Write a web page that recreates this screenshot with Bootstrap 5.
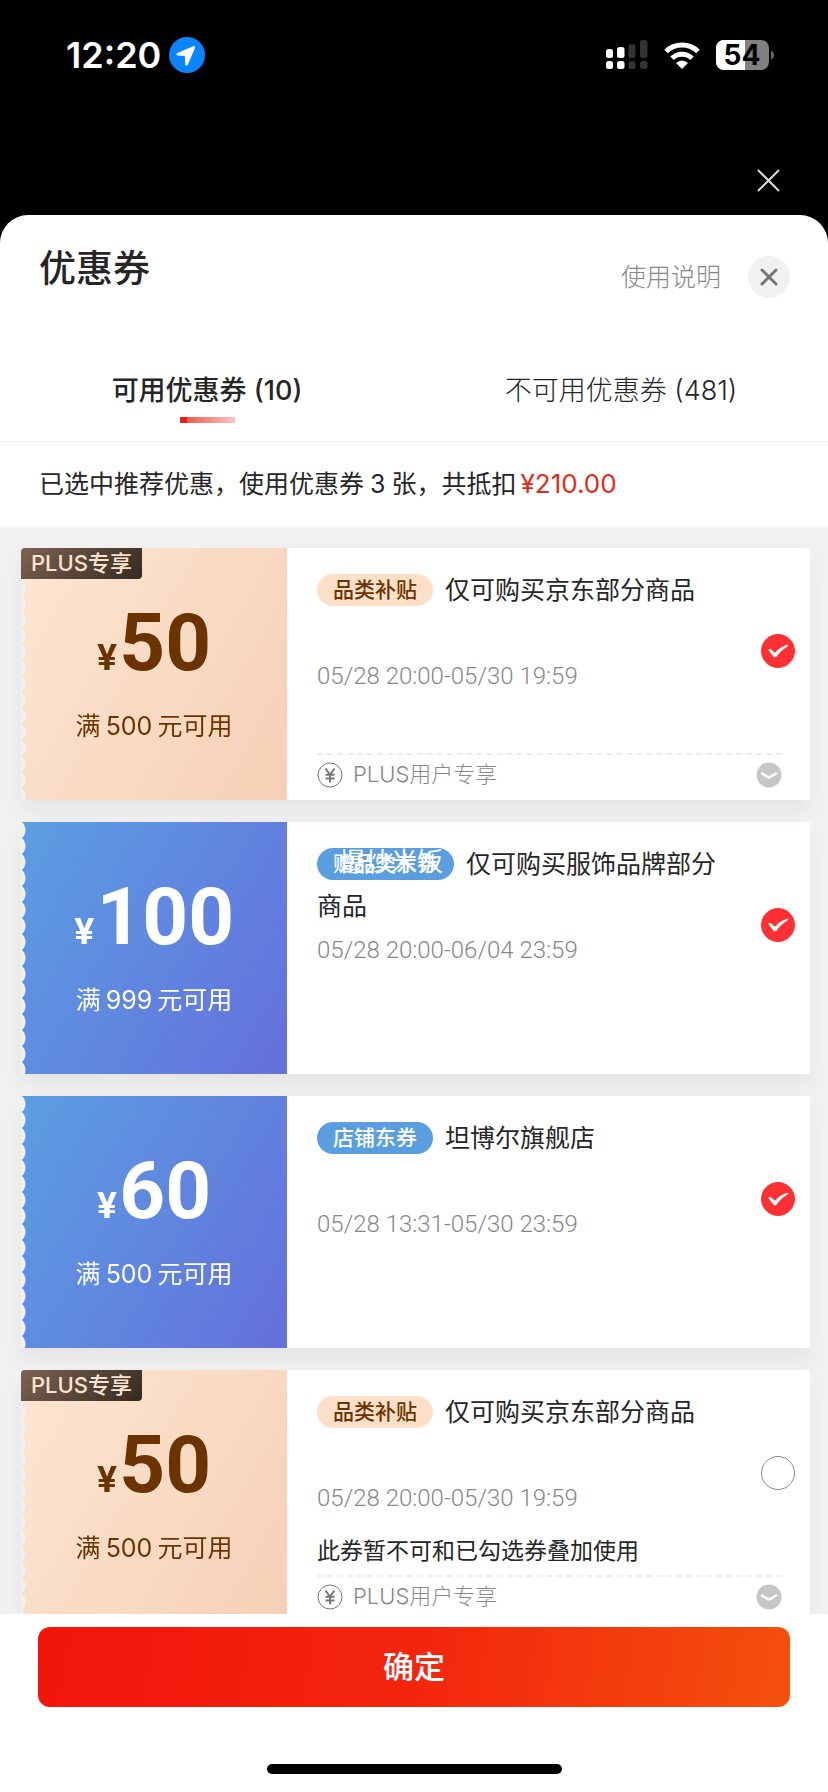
<!DOCTYPE html>
<html lang="zh-CN">
<head>
<meta charset="utf-8">
<meta name="viewport" content="width=device-width, initial-scale=1">
<title>优惠券</title>
<link href="https://cdn.jsdelivr.net/npm/bootstrap@5.3.0/dist/css/bootstrap.min.css" rel="stylesheet">
<style>
  body { font-family: Inter, "Noto Sans CJK SC", sans-serif; color: #262626; background: #000; }
  svg { display: block; }
  .clock { font-size: 36px; font-weight: 600; line-height: 44px; }
  .status { padding: 33px 54px 0 66px; height: 160px; }
  .status-icons { height: 44px; }
  .battery-text { font-size: 28px; font-weight: 700; }
  .backdrop-close { padding: 0 45px 20px 0; }
  .sheet { border-radius: 28px 28px 0 0; min-height: 0; }
  .sheet-head { padding: 30px 38px 0 39px; height: 126px; }
  .sheet-title { font-size: 37px; font-weight: 500; line-height: 48px; }
  .sheet-tools { gap: 27px; padding-top: 11px; }
  .help-link { font-size: 25px; font-weight: 300; line-height: 32px; color: #888; }
  .round-close { width: 42px; height: 42px; background: #f1f1f1; }
  .tab-row { border-bottom: 1px solid #eee; }
  .tab-btn { height: 100px; padding: 30px 0 18px; font-size: 27px; line-height: 40px; font-weight: 300; color: #262626; }
  .tab-btn.active { font-weight: 500; }
  .tab-bar { width: 55px; height: 7px; margin-top: 6px; background: linear-gradient(90deg, #e8210f 7px, #ee5c4b 7px, #f8c7c4); }
  .summary { font-size: 25px; line-height: 36px; padding: 24px 39px 25px; }
  .summary .count { padding: 0 6px; }
  .summary .money { font-size: 26px; color: #e02b1d; }
  .coupon-list { background: #f1f1f1; padding: 21px 18px 0 21px; gap: 22px; min-height: 0; overflow-y: auto; scrollbar-width: none; }
  .coupon-list::-webkit-scrollbar { display: none; }
  .coupon { min-height: 252px; box-shadow: 0 12px 20px rgba(0, 0, 0, .05); }
  .coupon-face { width: 266px; padding-top: 51px; background: linear-gradient(120deg, #5b9ee2, #6570dc);
    -webkit-mask: radial-gradient(circle at -6px 50%, transparent 10px, #000 11px) 0 0 / 100% 16px;
    mask: radial-gradient(circle at -6px 50%, transparent 10px, #000 11px) 0 0 / 100% 16px; }
  .plus .coupon-face { background: linear-gradient(120deg, #fee6d2, #f5d0b6); color: #6b3300; }
  .amount { font-family: Roboto, sans-serif; font-weight: 700; font-size: 80px; line-height: 88px; gap: 2px; }
  .amount small { font-family: Inter, sans-serif; font-size: 36px; font-weight: 700; }
  .limit { font-size: 25px; line-height: 36px; margin-top: 7px; }
  .limit span { padding: 0 5px; }
  .plus-flag { z-index: 1; font-size: 22px; line-height: 31px; padding: 0 10px; border-radius: 4px 0 4px 0; color: #fde4d0; font-weight: 500; background: linear-gradient(135deg, #7d6252, #352a22); }
  .coupon-main { height: 205px; padding: 21px 15px 0 30px; }
  .coupon-title { font-size: 25px; line-height: 42px; height: 84px; width: 410px; font-weight: 400; }
  .tag { font-size: 21px; line-height: 32px; font-weight: 500; padding: 0 16px; border-radius: 16px; margin-right: 12px; vertical-align: 2px; background: #5b9ee0; color: #fff; }
  .plus .tag { background: #fee0c8; color: #6b3300; }
  .tag-over { font-size: 26px; font-weight: 400; left: 22px; top: -2px; white-space: nowrap; }
  .period { font-family: Roboto, "Noto Sans CJK SC", sans-serif; font-weight: 300; font-size: 24px; line-height: 32px; margin-top: 7px; color: #888; }
  .conflict { font-size: 23px; line-height: 32px; margin-top: 21px; }
  .check { width: 34px; height: 34px; margin: -20px 0 0; border: 1px solid #888; background-color: #fff; flex: none; align-self: center; }
  .check:checked { border-color: #ff3034; background-color: #ff3034; background-size: 34px 34px;
    background-image: url("data:image/svg+xml,%3csvg xmlns='http://www.w3.org/2000/svg' viewBox='0 0 34 34'%3e%3cpath d='M7 15.4l2.4-.4 4.6 3.8q5-5.8 12.6-8.2l.6 1.3Q20 16 15 23.2h-2.200z' fill='%23fff'/%3e%3c/svg%3e"); }
  .coupon-note { margin: 0 28px 0 30px; border-top: 2px dashed #eee; font-size: 22px; line-height: 30px; height: 47px; padding-top: 4px; color: #888; font-weight: 300; }
  .coupon-note span { gap: 10px; }
  .action { padding: 13px 38px 0; height: 178px; }
  .confirm { height: 80px; border-radius: 12px; font-size: 31px; font-weight: 500; color: #fff; background: linear-gradient(100deg, #f2140c, #f3250d 50%, #f4500d); }
  .home-bar { width: 295px; height: 10px; margin-bottom: 18px; background: #000; }
</style>
</head>
<body class="vh-100 d-flex flex-column overflow-hidden">

<header class="status d-flex align-items-start justify-content-between text-white flex-shrink-0">
  <div class="d-flex align-items-center gap-2">
    <span class="clock">12:20</span>
    <svg width="36" height="36" viewBox="0 0 37 37"><circle cx="18.500" cy="18.500" r="18.500" fill="#0a84ff"/><path d="M25.400 9.300 8.600 16.500c-1.300.6-1 2.400.4 2.500l7.300.5.3 8.400c.1 1.600 2.100 1.900 2.700.5l7.300-16.900c.5-1.200-.2-2.500-1.200-2.200z" fill="#fff"/></svg>
  </div>
  <div class="status-icons d-flex align-items-center">
    <svg width="42" height="30" viewBox="0 0 42 30"><g fill="#fff"><rect y="9" width="7" height="9" rx="2.500"/><rect x="11" y="7" width="7.500" height="11" rx="2.500"/><rect y="21" width="7" height="8" rx="2.500"/><rect x="11" y="21" width="7.500" height="8" rx="2.500"/></g><g fill="#333"><rect x="22.500" y="4" width="7" height="14" rx="2.500"/><rect x="34" width="7.500" height="18" rx="2.500"/><rect x="22.500" y="21" width="7" height="8" rx="2.500"/><rect x="34" y="21" width="7.500" height="8" rx="2.500"/></g></svg>
    <svg class="ms-3" width="36" height="27" viewBox="0 0 36 27" fill="none" stroke="#fff"><path d="M2 9.500a23 23 0 0 1 32 0" stroke-width="5"/><path d="M8 16.200a14.500 14.500 0 0 1 20 0" stroke-width="5"/><path d="M18 27l-6-6q6-5 12 0z" fill="#fff" stroke="none"/></svg>
    <svg class="ms-3" width="58" height="30" viewBox="0 0 58 30"><defs><clipPath id="bat"><rect width="53" height="30" rx="8"/></clipPath></defs><g clip-path="url(#bat)"><rect width="53" height="30" fill="#808080"/><rect width="29" height="30" fill="#fff"/></g><path d="M55 10.500q3 1 3 4.500t-3 4.500z" fill="#666"/><text class="battery-text" x="26" y="25" text-anchor="middle" fill="#000">54</text></svg>
  </div>
</header>
<div class="backdrop-close d-flex justify-content-end flex-shrink-0">
  <button class="btn p-0 border-0" aria-label="关闭页面"><svg width="30" height="35" viewBox="0 0 30 35"><path d="M5 10 26 31M26 10 5 31" stroke="#ddd" stroke-width="2"/></svg></button>
</div>

<main class="sheet bg-white flex-fill d-flex flex-column overflow-hidden">
  <div class="sheet-head d-flex justify-content-between align-items-start flex-shrink-0">
    <h1 class="sheet-title m-0">优惠券</h1>
    <div class="sheet-tools d-flex align-items-center">
      <a href="#" class="help-link text-decoration-none">使用说明</a>
      <button class="round-close btn border-0 rounded-circle p-0 d-flex align-items-center justify-content-center" aria-label="关闭"><svg width="18" height="18" viewBox="0 0 18 18"><path d="M2 2l14 14M16 2 2 16" stroke="#777" stroke-width="3" stroke-linecap="round"/></svg></button>
    </div>
  </div>

  <div class="tab-row row g-0 flex-shrink-0" role="tablist">
    <button class="tab-btn active col btn border-0 rounded-0 d-flex flex-column align-items-center" role="tab" aria-selected="true">可用优惠券 (10)<span class="tab-bar"></span></button>
    <button class="tab-btn col btn border-0 rounded-0 d-flex flex-column align-items-center" role="tab" aria-selected="false">不可用优惠券 (481)</button>
  </div>

  <p class="summary m-0 flex-shrink-0">已选中推荐优惠，使用优惠券<span class="count">3</span>张，共抵扣<span class="money ps-1">¥210.00</span></p>

  <section class="coupon-list flex-fill d-flex flex-column">
    <article class="coupon plus d-flex position-relative flex-shrink-0">
      <span class="plus-flag position-absolute top-0 start-0">PLUS专享</span>
      <div class="coupon-face flex-shrink-0 text-center">
        <div class="amount d-flex justify-content-center align-items-baseline"><small>¥</small>50</div>
        <div class="limit">满<span>500</span>元可用</div>
      </div>
      <div class="flex-fill bg-white">
        <div class="coupon-main d-flex justify-content-between">
          <div>
            <h2 class="coupon-title m-0"><span class="tag d-inline-block">品类补贴</span><label for="c1">仅可购买京东部分商品</label></h2>
            <div class="period">05/28 20:00-05/30 19:59</div>
          </div>
          <input id="c1" class="form-check-input check rounded-circle" type="checkbox" checked>
        </div>
        <div class="coupon-note d-flex justify-content-between align-items-start">
          <span class="d-flex align-items-center"><svg width="26" height="30" viewBox="0 0 26 30"><g fill="none" stroke="#777"><circle cx="13" cy="16" r="12"/><path d="M8.500 9.500l4.500 6 4.500-6M13 15.500v8M8.500 15.800h9M8.500 19.500h9" stroke-width="2"/></g></svg>PLUS用户专享</span>
          <button class="btn p-0 border-0" aria-label="展开"><svg width="26" height="30" viewBox="0 0 26 30"><circle cx="13" cy="16" r="12.500" fill="#c6c6c6"/><path d="M6 14.500 12 18q1 .5 2 0l6-3.500" fill="none" stroke="#fff" stroke-width="2.600" stroke-linecap="round"/></svg></button>
        </div>
      </div>
    </article>

    <article class="coupon d-flex flex-shrink-0">
      <div class="coupon-face flex-shrink-0 text-center text-white">
        <div class="amount d-flex justify-content-center align-items-baseline"><small>¥</small>100</div>
        <div class="limit">满<span>999</span>元可用</div>
      </div>
      <div class="flex-fill bg-white">
        <div class="coupon-main d-flex justify-content-between">
          <div>
            <h2 class="coupon-title m-0"><span class="tag d-inline-block position-relative">赠品类东券<span class="tag-over position-absolute">爆炒米饭</span></span><label class="d-inline" for="c2">仅可购买服饰品牌部分商品</label></h2>
            <div class="period">05/28 20:00-06/04 23:59</div>
          </div>
          <input id="c2" class="form-check-input check rounded-circle" type="checkbox" checked>
        </div>
      </div>
    </article>

    <article class="coupon d-flex flex-shrink-0">
      <div class="coupon-face flex-shrink-0 text-center text-white">
        <div class="amount d-flex justify-content-center align-items-baseline"><small>¥</small>60</div>
        <div class="limit">满<span>500</span>元可用</div>
      </div>
      <div class="flex-fill bg-white">
        <div class="coupon-main d-flex justify-content-between">
          <div>
            <h2 class="coupon-title m-0"><span class="tag d-inline-block">店铺东券</span><label for="c3">坦博尔旗舰店</label></h2>
            <div class="period">05/28 13:31-05/30 23:59</div>
          </div>
          <input id="c3" class="form-check-input check rounded-circle" type="checkbox" checked>
        </div>
      </div>
    </article>

    <article class="coupon plus d-flex position-relative flex-shrink-0">
      <span class="plus-flag position-absolute top-0 start-0">PLUS专享</span>
      <div class="coupon-face flex-shrink-0 text-center">
        <div class="amount d-flex justify-content-center align-items-baseline"><small>¥</small>50</div>
        <div class="limit">满<span>500</span>元可用</div>
      </div>
      <div class="flex-fill bg-white">
        <div class="coupon-main d-flex justify-content-between">
          <div>
            <h2 class="coupon-title m-0"><span class="tag d-inline-block">品类补贴</span><label for="c4">仅可购买京东部分商品</label></h2>
            <div class="period">05/28 20:00-05/30 19:59</div>
            <div class="conflict">此券暂不可和已勾选券叠加使用</div>
          </div>
          <input id="c4" class="form-check-input check rounded-circle" type="checkbox">
        </div>
        <div class="coupon-note d-flex justify-content-between align-items-start">
          <span class="d-flex align-items-center"><svg width="26" height="30" viewBox="0 0 26 30"><g fill="none" stroke="#777"><circle cx="13" cy="16" r="12"/><path d="M8.500 9.500l4.500 6 4.500-6M13 15.500v8M8.500 15.800h9M8.500 19.500h9" stroke-width="2"/></g></svg>PLUS用户专享</span>
          <button class="btn p-0 border-0" aria-label="展开"><svg width="26" height="30" viewBox="0 0 26 30"><circle cx="13" cy="16" r="12.500" fill="#c6c6c6"/><path d="M6 14.500 12 18q1 .5 2 0l6-3.500" fill="none" stroke="#fff" stroke-width="2.600" stroke-linecap="round"/></svg></button>
        </div>
      </div>
    </article>
  </section>

  <footer class="action d-flex flex-column justify-content-between align-items-center flex-shrink-0">
    <button class="confirm btn border-0 w-100 p-0">确定</button>
    <div class="home-bar rounded-pill"></div>
  </footer>
</main>

<script src="https://cdn.jsdelivr.net/npm/bootstrap@5.3.0/dist/js/bootstrap.bundle.min.js"></script>
</body>
</html>
